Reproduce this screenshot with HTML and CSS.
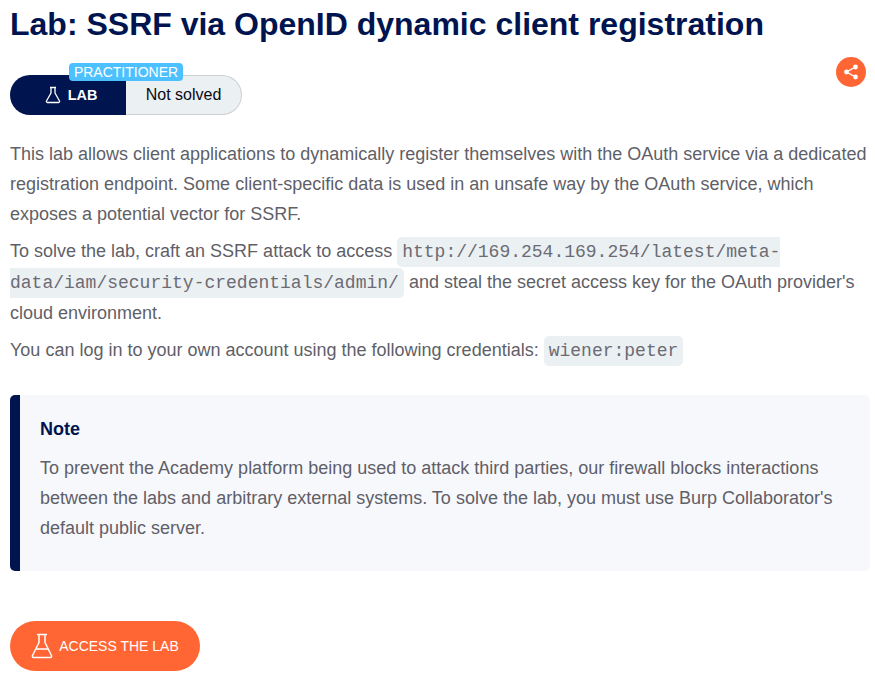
FILE: index.html
```html
<!DOCTYPE html>
<html lang="en">
<head>
    <meta charset="UTF-8">
    <title>Lab: SSRF via OpenID dynamic client registration</title>
    <link rel="stylesheet" href="styles.css">
</head>
<body>
    <div class="container">
        <h1>Lab: SSRF via OpenID dynamic client registration</h1>

        <div class="lab-meta">
            <div class="lab-status">
                <span class="level">PRACTITIONER</span>
                <div class="lab-tag">
                    <svg class="flask-small" viewBox="0 0 16 18" width="16" height="18">
                        <path d="M5 1.500h6M6 1.500v5.500L1.500 15a1 1 0 0 0 .9 1.500h11.200a1 1 0 0 0 .9-1.500L10 7V1.500" fill="none" stroke="#fff" stroke-width="1.300" stroke-linejoin="round"/>
                    </svg>
                    <span>LAB</span>
                </div>
                <div class="solved-tag">Not solved</div>
            </div>
            <a class="share" href="#">
                <svg viewBox="0 0 16 16" width="16" height="16">
                    <path d="M12.500 3 3.500 8l9 5" fill="none" stroke="#fff" stroke-width="1.400"/>
                    <circle cx="12.500" cy="3" r="2.400" fill="#fff"/>
                    <circle cx="3.500" cy="8" r="2.400" fill="#fff"/>
                    <circle cx="12.500" cy="13" r="2.400" fill="#fff"/>
                </svg>
            </a>
        </div>

        <div class="description">
            <p class="first">This lab allows client applications to dynamically register themselves with the OAuth service via a dedicated registration endpoint. Some client-specific data is used in an unsafe way by the OAuth service, which exposes a potential vector for SSRF.</p>
            <p>To solve the lab, craft an SSRF attack to access <code>http://169.254.169.254/latest/meta-data/iam/security-credentials/admin/</code> and steal the secret access key for the OAuth provider's cloud environment.</p>
            <p>You can log in to your own account using the following credentials: <code>wiener:peter</code></p>
        </div>

        <div class="note">
            <h4>Note</h4>
            <p>To prevent the Academy platform being used to attack third parties, our firewall blocks interactions between the labs and arbitrary external systems. To solve the lab, you must use Burp Collaborator's default public server.</p>
        </div>

        <a class="access-button" href="#">
            <svg viewBox="0 0 22 26" width="22" height="26">
                <path d="M6 1.500h10M8 1.500v8L1.800 22a1.500 1.500 0 0 0 1.400 2.500h15.600a1.500 1.500 0 0 0 1.400-2.500L14 9.500V1.500M5 16h12" fill="none" stroke="#fff" stroke-width="1.500" stroke-linejoin="round"/>
            </svg>
            <span>ACCESS THE LAB</span>
        </a>
    </div>
</body>
</html>
```

FILE: styles.css
```css
body {
    font-family: "Liberation Sans", Arial, sans-serif;
    background: #fff;
    color: #5f5f68;
    margin: 0;
    padding: 0 5px 0 10px;
    font-size: 18px;
    overflow: hidden;
}
.container {
    width: 860px;
}
h1 {
    margin: 0;
    padding-top: 5px;
    font-size: 32px;
    line-height: 38px;
    font-weight: bold;
    color: #001450;
}
.lab-meta {
    display: flex;
    justify-content: space-between;
    align-items: flex-start;
    margin-top: 32px;
}
.lab-status {
    position: relative;
    display: flex;
    width: 232px;
    height: 40px;
    border-radius: 20px;
}
.level {
    position: absolute;
    left: 59px;
    top: -12px;
    width: 114px;
    height: 18px;
    line-height: 18px;
    text-align: center;
    background: #4dc1ff;
    color: #fff;
    font-size: 14px;
    border-radius: 4px;
}
.lab-tag {
    width: 116px;
    box-sizing: border-box;
    padding-left: 6px;
    display: flex;
    align-items: center;
    justify-content: center;
    gap: 7px;
    background: #001450;
    color: #fff;
    font-size: 14.4px;
    font-weight: bold;
    border-radius: 20px 0 0 20px;
}
.solved-tag {
    width: 116px;
    box-sizing: border-box;
    line-height: 38px;
    text-align: center;
    background: #ebf0f2;
    border: 1px solid #cbd0d1;
    border-left: none;
    color: #0a0a14;
    font-size: 16px;
    border-radius: 0 20px 20px 0;
}
.share {
    display: flex;
    align-items: center;
    justify-content: center;
    width: 30px;
    height: 30px;
    margin-top: -18px;
    margin-right: 4px;
    border-radius: 50%;
    background: #ff6633;
}
.description {
    margin-top: 24px;
    line-height: 30px;
}
.description p {
    margin: 7px 0 0;
}
.description p.first {
    margin: 0;
}
code {
    font-family: "Liberation Mono", monospace;
    font-size: 18px;
    color: #6b6b74;
    background: #ebf0f2;
    padding: 5px;
    border-radius: 5px;
}
.note {
    margin-top: 29px;
    padding: 21px 20px 28px 20px;
    background: #f7f8fc;
    border-left: 10px solid #001450;
    border-radius: 5px;
    line-height: 30px;
}
.note h4 {
    margin: 0;
    font-size: 18px;
    line-height: 27px;
    color: #001450;
}
.note p {
    margin: 10px 0 0;
}
.access-button {
    display: inline-flex;
    align-items: center;
    justify-content: center;
    gap: 6px;
    width: 190px;
    height: 50px;
    margin-top: 50px;
    border-radius: 25px;
    background: #ff6633;
    color: #fff;
    font-size: 14px;
    text-decoration: none;
}
```
